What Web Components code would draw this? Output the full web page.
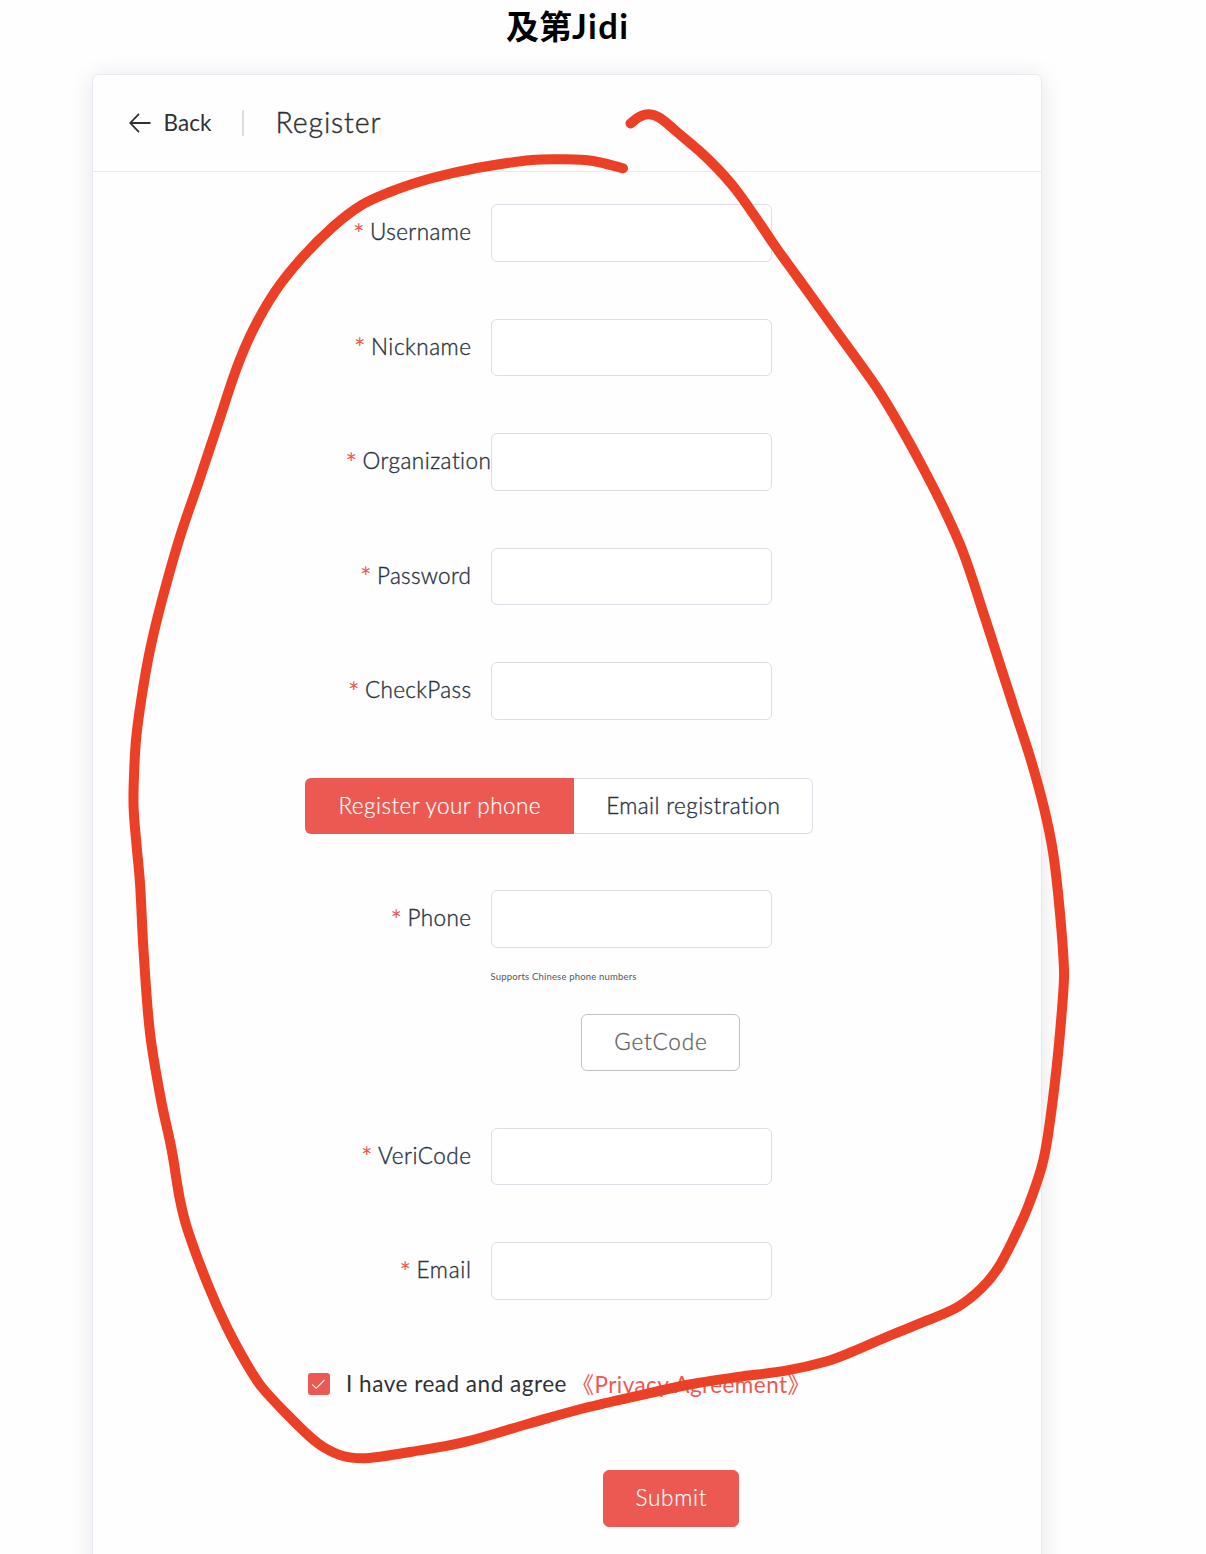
<!DOCTYPE html>
<html lang="en">
<head>
<meta charset="utf-8">
<title>及第Jidi</title>
<style>
html,body{margin:0;height:1554px;overflow:hidden;background:#fefefe}
body{font-family:Lato,"Noto Sans CJK SC",sans-serif;color:#2f3338}
</style>
</head>
<body>
<register-page></register-page>
<script>
const define = (name, html, setup) => customElements.define(name, class extends HTMLElement {
  connectedCallback() {
    if (this.shadowRoot) return;
    const t = document.createElement('template');
    t.innerHTML = html;
    this.attachShadow({mode: 'open'}).append(t.content.cloneNode(true));
    if (setup) setup(this, this.shadowRoot);
  }
});

// One line of text, tracked so that it spans the given width.
define('tracked-text', `<style>:host{display:block;white-space:nowrap;flex:none}span{display:inline-block}</style><span><slot></slot></span>`, (el, root) => {
  const s = root.querySelector('span');
  const w = +el.getAttribute('width');
  s.style.letterSpacing = '0px';
  const extra = (w - s.getBoundingClientRect().width) / (el.textContent.length - 1);
  s.style.letterSpacing = extra + 'px';
  s.style.marginRight = -extra + 'px';
});

define('text-field', `<style>
:host{display:flex;height:57.25px;margin-bottom:57.25px}
.label{box-sizing:border-box;width:186px;display:flex;justify-content:flex-end;align-items:center;gap:6px;padding:0 20px 1.8px 0;font-size:22.5px;line-height:30px;color:#28323f;font-weight:300;-webkit-text-stroke:.35px currentColor}
:host([tight]) .label{padding-right:0}
i{font-style:normal;color:#ec5a52;width:11px;text-align:center;font-size:27px;font-weight:400;padding-top:3px;-webkit-text-stroke:0}
input{box-sizing:border-box;width:281px;height:100%;margin:0;border:1px solid #dcdee5;border-radius:6px;background:#fff;outline:0}
</style><div class="label"><i>*</i><slot></slot></div><input>`);

define('method-switch', `<style>
:host{display:flex;height:56px;width:508px;margin:1.1px 0 56.4px;font-size:22.5px;line-height:30px}
div{box-sizing:border-box;display:flex;align-items:center;justify-content:center;font-weight:300;-webkit-text-stroke:.35px currentColor}
.on{width:269px;background:#ec5852;color:#fff;border-radius:6px 0 0 6px;-webkit-text-stroke-width:.2px}
.off{width:239px;border:1px solid #dcdee5;border-left:0;border-radius:0 6px 6px 0;color:#28323f;background:#fff}
</style><div class="on"><tracked-text width="202">Register your phone</tracked-text></div><div class="off"><tracked-text width="174">Email registration</tracked-text></div>`);

define('push-button', `<style>
:host{display:block}
button{box-sizing:border-box;width:100%;height:57px;border:1px solid #c0c2c7;border-radius:6px;background:#fff;color:#606266;font:300 22.5px/30px Lato,sans-serif;display:flex;align-items:center;justify-content:center;padding:0 0 1px;-webkit-text-stroke:.3px currentColor}
:host([primary]) button{background:#ec5852;border-color:#ec5852;color:#fff;-webkit-text-stroke-width:.2px}
</style><button><slot></slot></button>`);

define('card-header', `<style>
:host{box-sizing:border-box;display:flex;align-items:center;height:97px;border-bottom:1px solid #e8e9f3;padding-left:36px;color:#303133}
svg{width:22px;height:20px;margin:0 12.5px 1px 0}
.back{font-size:22.5px;line-height:30px;padding-bottom:1px}
hr{width:2px;height:26px;border:0;background:#dcdee3;margin:0 32px 0 30px}
.title{font-size:28.5px;line-height:36px;font-weight:300;padding-bottom:2px;color:#303133;-webkit-text-stroke:.4px currentColor}
</style><svg viewBox="0 0 22 20" fill="none" stroke="#303133" stroke-width="1.8"><path d="M10 .8 1.3 10l8.7 9.2M1.3 10H21.5"/></svg><tracked-text class="back" width="48">Back</tracked-text><hr><tracked-text class="title" width="105">Register</tracked-text>`);

define('agree-row', `<style>
:host{display:flex;align-items:center;height:32px;margin:11.1px 0 70px;padding-left:3px;font-size:22.5px;line-height:30px;color:#303133}
.box{width:22px;height:22px;border-radius:3px;background:#ec5852;margin-right:16px}
svg{display:block}
.said{padding-top:1px}
a{color:#ec5852;margin-left:5px;display:block;padding-top:2px}
</style><div class="box"><svg width="22" height="22" fill="none" stroke="#fff" stroke-width="1.1"><path d="m4.2 11.3 4 4L16.4 7"/></svg></div><tracked-text class="said" width="220.5">I have read and agree</tracked-text><a><tracked-text width="238.5">《Privacy Agreement》</tracked-text></a>`);

// Freehand stroke through a list of points.
define('ink-stroke', `<style>:host{position:absolute;left:0;top:0;width:1206px;height:1554px;pointer-events:none}svg{display:block}</style>
<svg width="1206" height="1554" fill="none" stroke="#ec4026" stroke-width="10" stroke-linecap="round" stroke-linejoin="round"><path/></svg>`, (el, root) => {
  const p = el.getAttribute('points').trim().split(/\s+/).map(s => s.split(',').map(Number));
  let d = `M${p[0]}`;
  for (let i = 0; i < p.length - 1; i++) {
    const a = p[i - 1] || p[i], b = p[i], c = p[i + 1], e = p[i + 2] || c;
    const l = Math.hypot(c[0] - b[0], c[1] - b[1]);
    const ctl = (from, x, y, sign) => {
      const n = Math.hypot(y[0] - x[0], y[1] - x[1]) || 1;
      return [from[0] + sign * (y[0] - x[0]) / n * l / 3, from[1] + sign * (y[1] - x[1]) / n * l / 3];
    };
    d += `C${ctl(b, a, c, 1)} ${ctl(c, b, e, -1)} ${c}`;
  }
  root.querySelector('path').setAttribute('d', d);
});

define('register-page', `<style>
:host{display:block;position:relative;width:1206px;height:1554px;overflow:hidden}
h1{box-sizing:border-box;margin:0;height:74px;padding:2px 0 0 506px;font:700 33px/48px Lato,"Noto Sans CJK SC",sans-serif;color:#000;display:flex}
h1 .latin{font-size:34.5px}
.card{box-sizing:border-box;width:950px;height:1540px;margin-left:92px;border:1px solid #e8eaf3;border-radius:6px;background:#fefefe;box-shadow:0 3px 24px rgba(0,0,0,.1)}
form{display:flex;flex-direction:column;padding:32.4px 0 0 212px}
.hint{margin:-35.2px 0 30.1px 185.5px;font-size:9.5px;line-height:14px;color:#55575b}
.code{width:159px;margin:0 0 57.1px 276px}
.submit{width:136px;margin-left:298px}
</style>
<h1><tracked-text width="66">及第</tracked-text><tracked-text class="latin" width="56">Jidi</tracked-text></h1>
<div class="card"><card-header></card-header><form>
<text-field><tracked-text width="101">Username</tracked-text></text-field>
<text-field><tracked-text width="100">Nickname</tracked-text></text-field>
<text-field tight><tracked-text width="129">Organization</tracked-text></text-field>
<text-field><tracked-text width="94">Password</tracked-text></text-field>
<text-field><tracked-text width="106">CheckPass</tracked-text></text-field>
<method-switch></method-switch>
<text-field><tracked-text width="63.5">Phone</tracked-text></text-field>
<div class="hint"><tracked-text width="146">Supports Chinese phone numbers</tracked-text></div>
<push-button class="code"><tracked-text width="92.5">GetCode</tracked-text></push-button>
<text-field><tracked-text width="93">VeriCode</tracked-text></text-field>
<text-field><tracked-text width="54.5">Email</tracked-text></text-field>
<agree-row></agree-row>
<push-button class="submit" primary><tracked-text width="71">Submit</tracked-text></push-button>
</form></div>
<ink-stroke points="630.5,123.5 639,117 649,114.3 660,118 677,132 700,151.5 717,168 735,188.5 754,215 775,246 797,276.5 834,328 877,388 900,426 921,464 943,507 963,552 985,618 1014,708 1030,757 1044,808 1053,852 1059.5,908 1064,970 1062.7,1000 1056.7,1066.7 1048,1135 1041.7,1166.7 1028,1206.7 1013,1240 998,1268 981.7,1288 958,1306.7 926.7,1320.7 890,1335.5 850,1352.7 826,1361.5 786,1370.7 738,1377 689.5,1384.5 634,1396.7 579,1409.5 531,1423 462,1442.7 410,1452 380,1456.7 362,1458.3 343,1456 325,1448 310,1436.7 286.7,1414 261.7,1387 246.7,1364 226.7,1327 208,1285 188,1231 180,1200 171.7,1150 161,1100 150,1033 143.5,950 140,883 136.7,846.7 133.7,810 133.7,784 136,740 141.7,696.7 150,650 162,600 180,536.7 198.3,483 218.3,423 236.7,368 253,330 275,291.7 301.7,258 333,226.7 361.7,205 390,192 420,181.5 447,174.3 485.7,166.5 531.6,160 562,159.3 593,161 623,168.3"></ink-stroke>`);
</script>
</body>
</html>
